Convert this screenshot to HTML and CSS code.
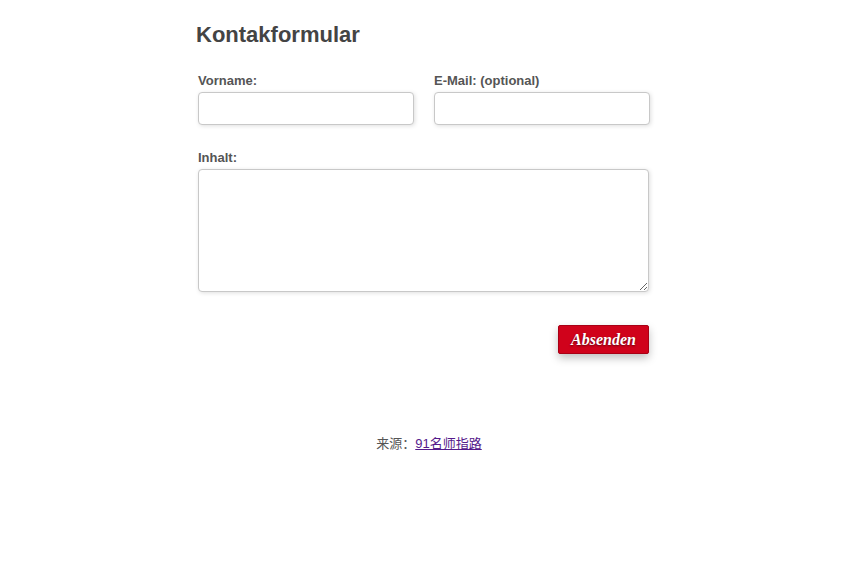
FILE: index.html
```html
<!DOCTYPE html>
<html lang="de">
<head>
    <meta charset="UTF-8">
    <meta name="viewport" content="width=device-width, initial-scale=1.0">
    <title>Kontakformular</title>
    <link rel="stylesheet" href="styles.css">
</head>
<body>
    <div class="form-wrap">
        <h1>Kontakformular</h1>
        <form class="contact-form">
            <div class="row">
                <div class="field">
                    <label for="vorname">Vorname:</label>
                    <input type="text" id="vorname">
                </div>
                <div class="field">
                    <label for="email">E-Mail: (optional)</label>
                    <input type="email" id="email">
                </div>
            </div>
            <div class="field full">
                <label for="inhalt">Inhalt:</label>
                <textarea id="inhalt"></textarea>
            </div>
            <div class="actions">
                <button type="button" class="send">Absenden</button>
            </div>
        </form>
    </div>

    <p class="source">来源：<a href="#">91名师指路</a></p>
</body>
</html>
```

FILE: styles.css
```css
body {
    margin: 0;
    background: #fff;
    color: #555;
    font-family: "Liberation Sans", Arial, sans-serif;
}
.form-wrap {
    width: 466px;
    margin: 0 auto;
    padding-top: 21px;
}
h1 {
    margin: 0 0 25px 0;
    font-size: 22px;
    color: #444;
    line-height: 27px;
}
.contact-form {
    padding-left: 2px;
}
.row {
    display: flex;
    gap: 20px;
    width: 452px;
}
.field {
    display: flex;
    flex-direction: column;
    flex: 1;
}
.field label {
    font-size: 13px;
    font-weight: bold;
    line-height: 16px;
    margin-bottom: 3px;
}
.field input,
.field textarea {
    box-sizing: border-box;
    border: 1px solid #c8c8c8;
    border-radius: 4px;
    box-shadow: 1px 1px 4px rgba(0, 0, 0, 0.13);
    background: #fff;
    font-family: inherit;
}
.field input {
    height: 33px;
}
.full {
    margin-top: 25px;
    width: 452px;
}
.field textarea {
    height: 123px;
    width: 451px;
    resize: both;
}
.actions {
    display: flex;
    justify-content: flex-end;
    width: 451px;
    margin-top: 33px;
}
.send {
    width: 91px;
    height: 29px;
    padding: 0;
    background: #d0021b;
    border: 1px solid #a80015;
    border-radius: 2px;
    color: #fff;
    font-family: "Liberation Serif", Georgia, serif;
    font-style: italic;
    font-weight: bold;
    font-size: 16px;
    text-shadow: 0 1px 2px rgba(0, 0, 0, 0.5);
    box-shadow: 0 4px 8px rgba(0, 0, 0, 0.25);
    cursor: pointer;
}
.source {
    margin: 79px 0 0 0;
    text-align: center;
    font-size: 13px;
    color: #555;
    font-family: "Liberation Sans", "Noto Sans CJK SC", sans-serif;
}
.source a {
    color: #551a8b;
}
```
